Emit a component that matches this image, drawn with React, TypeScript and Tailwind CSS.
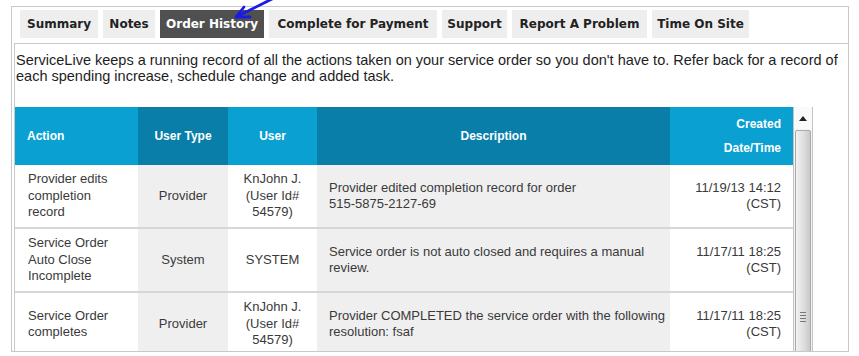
import React from "react";

const cols = "grid grid-cols-[123px_90px_89px_353px_123px]";

type Row = {
  action: React.ReactNode;
  userType: string;
  user: React.ReactNode;
  desc: React.ReactNode;
  date: string;
};

const rows: Row[] = [
  {
    action: (
      <>
        Provider edits
        <br />
        completion
        <br />
        record
      </>
    ),
    userType: "Provider",
    user: (
      <>
        KnJohn J.
        <br />
        (User Id#
        <br />
        54579)
      </>
    ),
    desc: (
      <>
        Provider edited completion record for order
        <br />
        515-5875-2127-69
      </>
    ),
    date: "11/19/13 14:12",
  },
  {
    action: (
      <>
        Service Order
        <br />
        Auto Close
        <br />
        Incomplete
      </>
    ),
    userType: "System",
    user: <>SYSTEM</>,
    desc: (
      <>
        Service order is not auto closed and requires a manual
        <br />
        review.
      </>
    ),
    date: "11/17/11 18:25",
  },
  {
    action: (
      <>
        Service Order
        <br />
        completes
      </>
    ),
    userType: "Provider",
    user: (
      <>
        KnJohn J.
        <br />
        (User Id#
        <br />
        54579)
      </>
    ),
    desc: (
      <>
        Provider COMPLETED the service order with the following
        <br />
        resolution: fsaf
      </>
    ),
    date: "11/17/11 18:25",
  },
];

const tabs: { label: string; w: string }[] = [
  { label: "Summary", w: "w-[78px]" },
  { label: "Notes", w: "w-[52px]" },
  { label: "Order History", w: "w-[104px]" },
  { label: "Complete for Payment", w: "w-[168px]" },
  { label: "Support", w: "w-[65px]" },
  { label: "Report A Problem", w: "w-[135px]" },
  { label: "Time On Site", w: "w-[97px]" },
];

export default function App() {
  return (
    <div className="relative w-[859px] h-[356px] bg-white overflow-hidden pt-[6px] pl-[11px] font-['Liberation_Sans',Arial,sans-serif]">
      <div className="w-[838px] h-[346px] border border-[#c8c8c8] flex flex-col overflow-hidden">
        {/* Tabs */}
        <div className="flex gap-[5px] pl-[8px] pt-[3px] shrink-0">
          {tabs.map((t) => {
            const active = t.label === "Order History";
            return (
              <div
                key={t.label}
                className={
                  t.w +
                  " h-[28px] flex items-center justify-center text-[12px] font-bold font-['DejaVu_Sans',Verdana,sans-serif] whitespace-nowrap " +
                  (active ? "bg-[#505050] text-white" : "bg-[#eeeeee] text-[#222]")
                }
              >
                {t.label}
              </div>
            );
          })}
        </div>

        {/* Panel */}
        <div className="mt-[5px] ml-[2px] flex-1 border-t border-l border-[#c8c8c8] flex flex-col min-h-0">
          <p className="pl-[1px] pt-[8px] text-[14.5px] leading-[16px] text-[#1e1e1e] whitespace-nowrap shrink-0">
            ServiceLive keeps a running record of all the actions taken on your service order so you don't have to. Refer back for a record of
            <br />
            each spending increase, schedule change and added task.
          </p>

          <div className="mt-[23px] flex-1 flex min-h-0 overflow-hidden">
            {/* table */}
            <div className="w-[778px] flex flex-col">
              <div className={cols + " shrink-0 h-[58px] text-white text-[12px] font-bold"}>
                <div className="bg-[#0aa0d2] flex items-center pl-[12px]">Action</div>
                <div className="bg-[#087ea8] flex items-center justify-center">User Type</div>
                <div className="bg-[#0aa0d2] flex items-center justify-center">User</div>
                <div className="bg-[#087ea8] flex items-center justify-center">Description</div>
                <div className="bg-[#0aa0d2] flex flex-col justify-center items-end pr-[12px] leading-[24px]">
                  <span>Created</span>
                  <span>Date/Time</span>
                </div>
              </div>
              {rows.map((r, i) => (
                <div
                  key={i}
                  className={cols + " shrink-0 h-[64px] border-b-2 border-[#d6d6d6] text-[13px] leading-[16.5px] text-[#3a3a3a]"}
                >
                  <div className="bg-white flex items-center pl-[13px]">
                    <div>{r.action}</div>
                  </div>
                  <div className="bg-[#efefef] flex items-center justify-center">{r.userType}</div>
                  <div className="bg-white flex items-center justify-center text-center">
                    <div>{r.user}</div>
                  </div>
                  <div className="bg-[#efefef] flex items-center pl-[12px] whitespace-nowrap">
                    <div>{r.desc}</div>
                  </div>
                  <div className="bg-white flex items-center justify-end pr-[12px] text-right">
                    <div>
                      {r.date}
                      <br />
                      (CST)
                    </div>
                  </div>
                </div>
              ))}
            </div>

            {/* scrollbar */}
            <div className="w-[20px] shrink-0 bg-[#f4f4f4] border-l border-r border-[#c4c4c4] flex flex-col">
              <div className="h-[22px] shrink-0 bg-[#fafafa] flex items-center justify-center">
                <svg width="8" height="5" viewBox="0 0 8 5">
                  <path d="M0 5 L4 0 L8 5 Z" fill="#222" />
                </svg>
              </div>
              <div className="mx-[1px] mt-[1px] h-[400px] shrink-0 rounded-[2px] border border-[#a8a8a8] bg-[linear-gradient(to_right,#f2f2f2,#dcdcdc_60%,#c9c9c9)] flex justify-center">
                <div className="mt-[181px] flex flex-col gap-[2px]">
                  <div className="w-[6px] h-[1px] bg-[#777]" />
                  <div className="w-[6px] h-[1px] bg-[#777]" />
                  <div className="w-[6px] h-[1px] bg-[#777]" />
                  <div className="w-[6px] h-[1px] bg-[#777]" />
                </div>
              </div>
            </div>
            <div className="flex-1 bg-white" />
          </div>
        </div>
      </div>

      {/* annotation arrow */}
      <svg className="absolute left-0 top-0" width="859" height="40" viewBox="0 0 859 40">
        <path d="M274 -2 L238 16" stroke="#1a1ae6" strokeWidth="2.8" fill="none" strokeLinecap="round" />
        <path d="M244 7 L236 17 L250 17" stroke="#1a1ae6" strokeWidth="2.8" fill="none" strokeLinecap="round" strokeLinejoin="round" />
      </svg>
    </div>
  );
}
